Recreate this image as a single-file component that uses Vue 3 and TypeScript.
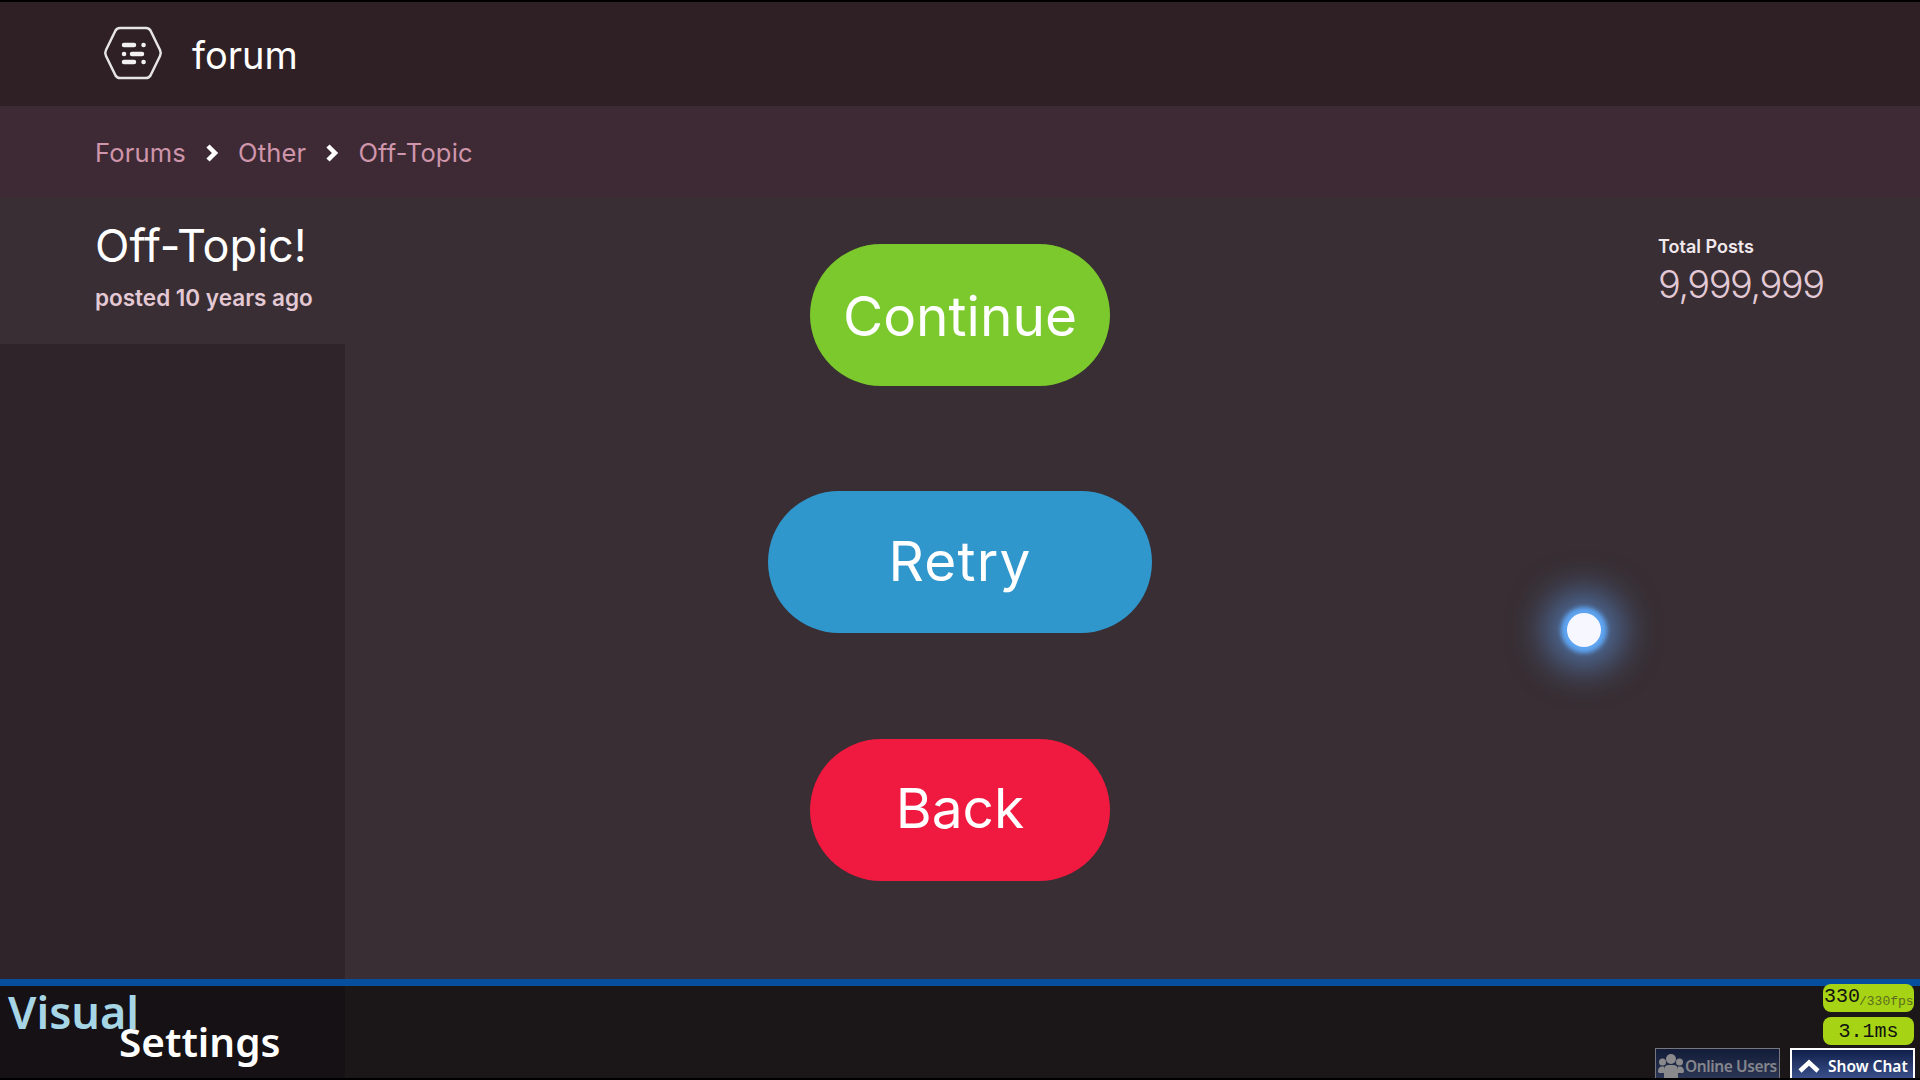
<template>
  <div class="screen">
    <header class="topbar">
      <svg class="logo" width="60" height="56" viewBox="0 0 60 56" fill="none">
        <path d="M17 3H43Q46 3 47.500 5.500L57 25Q58.500 28 57 31L47.500 50.500Q46 53 43 53H17Q14 53 12.500 50.500L3 31Q1.500 28 3 25L12.500 5.500Q14 3 17 3Z" stroke="#e6e4e5" stroke-width="2.500" />
        <path d="M21 20H31M40.500 20H40.600M21 29H21.100M29 29H39M21 37H31M40.500 37H40.600" stroke="#f2f0f1" stroke-width="4.500" stroke-linecap="round" />
      </svg>
      <span class="brand">forum</span>
    </header>

    <nav class="crumbs">
      <template v-for="(c, i) in crumbs" :key="c">
        <span class="crumb">{{ c }}</span>
        <svg v-if="i < crumbs.length - 1" class="chev" width="14" height="20" viewBox="0 0 14 20" fill="none">
          <path d="M3 3L10 10L3 17" stroke="#fff" stroke-width="4.500" />
        </svg>
      </template>
    </nav>

    <main class="main">
      <aside class="left">
        <div class="title-block">
          <h1>Off-Topic!</h1>
          <p>posted 10 years ago</p>
        </div>
        <div class="sidebar"></div>
      </aside>
      <section class="stats">
        <div class="stat-label">Total Posts</div>
        <div class="stat-value">9,999,999</div>
      </section>

      <div class="menu">
        <button class="btn green">Continue</button>
        <button class="btn blue">Retry</button>
        <button class="btn red">Back</button>
      </div>
      <div class="cursor"></div>
    </main>

    <footer class="bottom">
      <div class="visual-settings">
        <span class="vs-a">Visual</span>
        <span class="vs-b">Settings</span>
      </div>
      <div class="perf">
        <div class="pill fps"><b>330</b><small>/330fps</small></div>
        <div class="pill ms">3.1ms</div>
      </div>
      <div class="tabs">
        <div class="tab online">
          <svg width="26" height="26" viewBox="0 0 26 26" fill="#8a8a8c">
            <circle cx="13" cy="6" r="5" />
            <circle cx="4.500" cy="9" r="3.500" />
            <circle cx="21.500" cy="9" r="3.500" />
            <path d="M6 26V17Q6 12 11 12H15Q20 12 20 17V26Z" />
            <path d="M0 19Q0 13.500 4 13.500H6V20H1ZM26 19Q26 13.500 22 13.500H20V20H25Z" />
          </svg>
          <span>Online Users</span>
        </div>
        <div class="tab chat">
          <svg width="22" height="14" viewBox="0 0 22 14" fill="none">
            <path d="M2 12L11 3.500L20 12" stroke="#fff" stroke-width="4.500" />
          </svg>
          <span>Show Chat</span>
        </div>
      </div>
    </footer>
  </div>
</template>

<script setup lang="ts">
const crumbs: string[] = ['Forums', 'Other', 'Off-Topic'];
</script>

<style scoped>
.screen {
  width: 1920px;
  height: 1080px;
  display: flex;
  flex-direction: column;
  overflow: hidden;
  background: #382e33;
  font-family: Inter, Lato, sans-serif;
  color: #fff;
  border-top: 2px solid #000;
  border-bottom: 2px solid #000;
  box-sizing: border-box;
}

.topbar {
  height: 104px;
  flex: none;
  display: flex;
  align-items: center;
  padding-left: 103px;
  background: #2e2025;
  box-sizing: border-box;
}

.logo {
  margin-top: -2px;
}

.brand {
  margin-left: 29px;
  padding-top: 2px;
  font-size: 38px;
  font-weight: 400;
  color: #fff;
}

.crumbs {
  height: 91px;
  flex: none;
  display: flex;
  align-items: center;
  padding: 2px 0 0 95px;
  background: #3e2a35;
  box-sizing: border-box;
}

.crumb {
  font-size: 25.500px;
  letter-spacing: 0.200px;
  color: #cf95aa;
}

.chev {
  margin: 0 19px;
}

.main {
  flex: 1;
  position: relative;
  display: flex;
  justify-content: space-between;
  min-height: 0;
}

.left {
  width: 345px;
  display: flex;
  flex-direction: column;
}

.title-block {
  height: 147px;
  flex: none;
  padding: 22px 0 0 95px;
  box-sizing: border-box;
  white-space: nowrap;
}

.title-block h1 {
  margin: 0;
  font-size: 45px;
  line-height: 54px;
  font-weight: 400;
}

.title-block p {
  margin: 11px 0 0;
  font-size: 22.500px;
  line-height: 28px;
  font-weight: 600;
  color: #e4c9d5;
}

.sidebar {
  flex: 1;
  background: #2e2429;
}

.stats {
  width: 262px;
  padding-top: 38px;
  box-sizing: border-box;
}

.stat-label {
  font-size: 18px;
  line-height: 24px;
  font-weight: 600;
  color: #f1e9ed;
}

.stat-value {
  margin-top: 2px;
  font-size: 38px;
  line-height: 46px;
  font-weight: 300;
  letter-spacing: -1.500px;
  color: #e3c9d5;
}

.menu {
  position: absolute;
  left: 0;
  right: 0;
  top: 47px;
  display: flex;
  flex-direction: column;
  align-items: center;
}

.btn {
  height: 142px;
  width: 300px;
  border: 0;
  border-radius: 71px;
  padding: 0;
  color: #fff;
  font-family: inherit;
  font-size: 55px;
  font-weight: 400;
}

.btn.green {
  background: #7bc92d;
  padding-top: 2px;
}

.btn.blue {
  width: 384px;
  margin: 105px 0 106px;
  background: #3097cc;
  letter-spacing: 1.200px;
  padding-bottom: 2px;
}

.btn.red {
  background: #f0193f;
  padding-bottom: 4px;
}

.cursor {
  position: absolute;
  left: 1567px;
  top: 416px;
  width: 34px;
  height: 34px;
  border-radius: 50%;
  background: #f7f8ff;
  box-shadow: 0 0 4px 6px #5fa5f2, 0 0 36px 22px rgba(96, 160, 240, 0.6);
}

.bottom {
  height: 99px;
  flex: none;
  position: relative;
  background: #1b1719;
  border-top: 7px solid #064e9e;
  box-sizing: border-box;
}

.visual-settings {
  width: 345px;
  height: 100%;
  position: relative;
  background: #151114;
  font-family: "Noto Sans", sans-serif;
  font-weight: 600;
  font-size: 45px;
  line-height: 1;
}

.vs-a,
.vs-b {
  position: absolute;
}

.vs-a {
  left: 8px;
  top: 3px;
  color: #a6d6e6;
}

.vs-b {
  left: 119px;
  top: 36px;
  color: #fff;
  font-size: 40.500px;
}

.perf {
  position: absolute;
  right: 6px;
  top: -2px;
  display: flex;
  flex-direction: column;
  gap: 5px;
  width: 91px;
}

.pill {
  height: 28px;
  border-radius: 8px;
  background: #a6d414;
  color: #111;
  font-family: "Liberation Mono", monospace;
  white-space: nowrap;
  overflow: hidden;
}

.pill.fps {
  padding-left: 1px;
  line-height: 25px;
  font-size: 20px;
}

.pill.fps b {
  font-weight: 400;
}

.pill.fps small {
  margin-left: -1px;
  font-size: 13px;
  vertical-align: -3px;
  color: #5c6b1e;
}

.pill.ms {
  text-align: center;
  line-height: 29px;
  font-size: 20px;
}

.tabs {
  position: absolute;
  right: 5px;
  bottom: 0;
  display: flex;
  gap: 10px;
}

.tab {
  height: 30px;
  box-sizing: border-box;
  display: flex;
  align-items: center;
  padding-top: 4px;
  background: linear-gradient(#11204a, #3a4f8a);
  font-family: "Noto Sans", sans-serif;
  font-weight: 600;
  font-size: 15.500px;
  white-space: nowrap;
}

.tab svg {
  flex: none;
}

.tab.online {
  width: 125px;
  border: 1px solid #77787f;
  border-bottom: 0;
  background: linear-gradient(#121c38, #2b3654);
  color: #85868c;
  padding-left: 2px;
  gap: 1px;
  letter-spacing: -0.400px;
}

.tab.chat {
  width: 125px;
  border: 2px solid #fff;
  border-bottom: 0;
  padding-left: 6px;
  gap: 8px;
}
</style>

<style>
html,
body {
  margin: 0;
  background: #000;
}
</style>
